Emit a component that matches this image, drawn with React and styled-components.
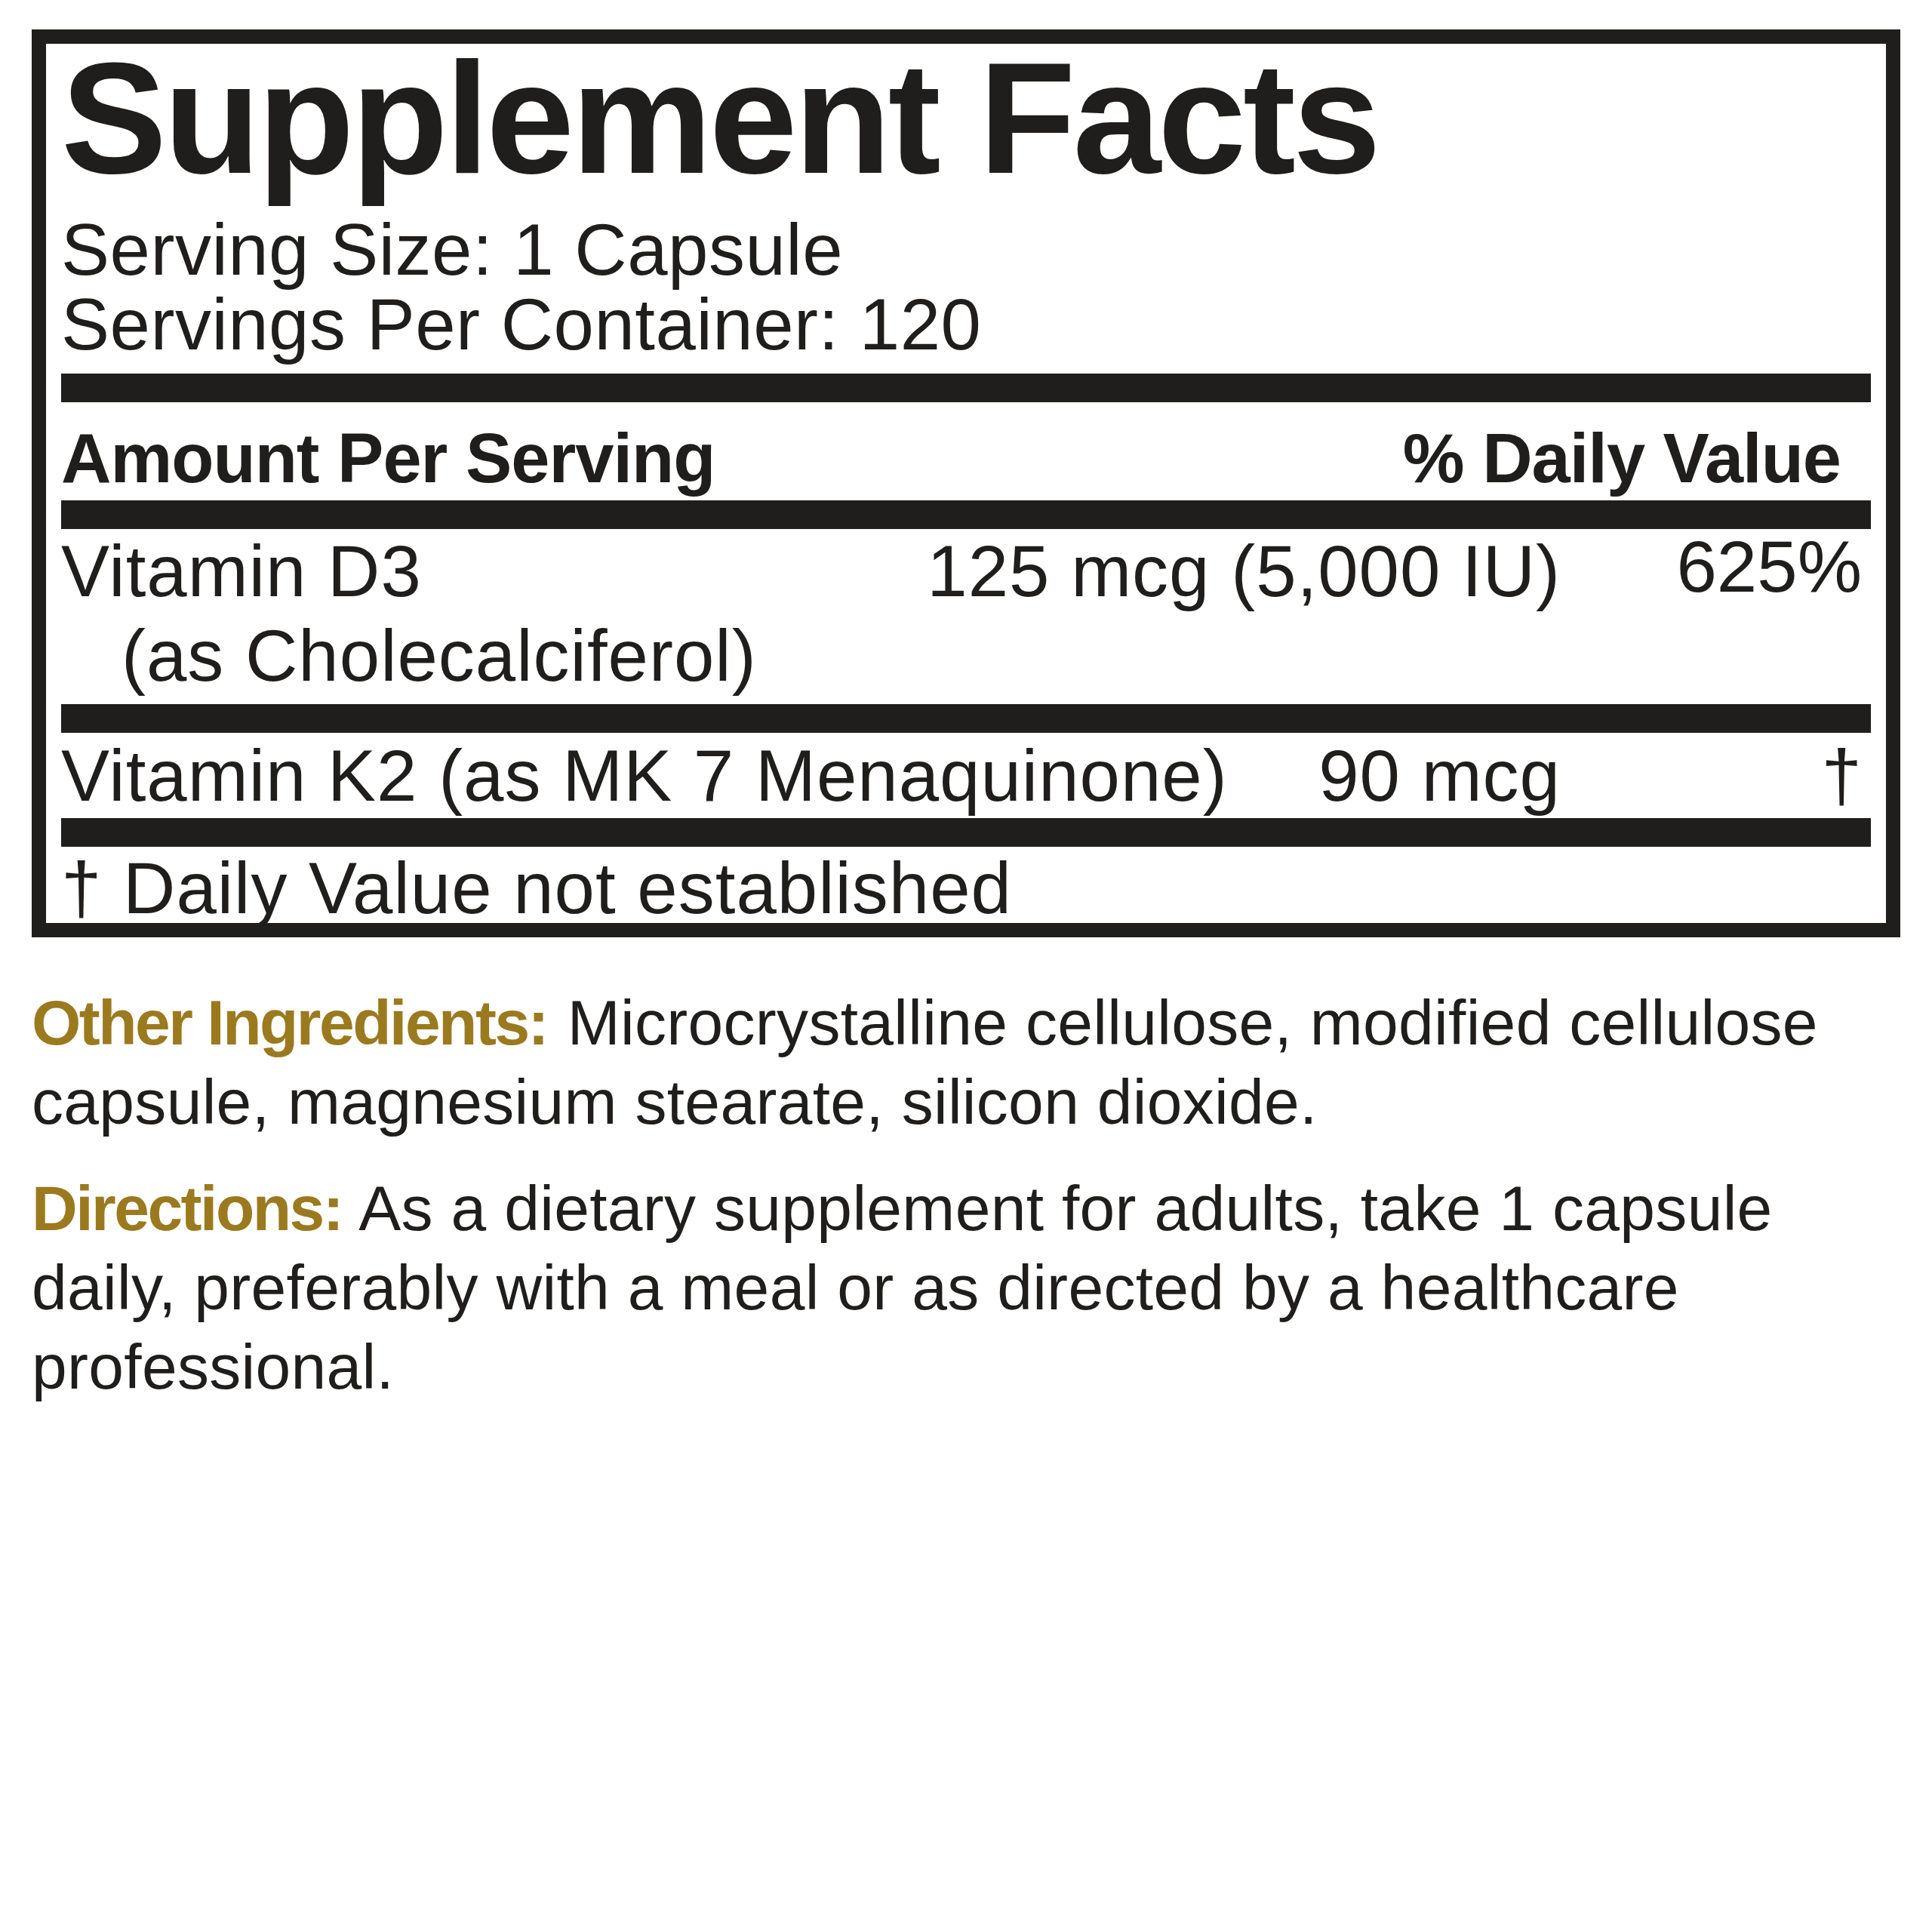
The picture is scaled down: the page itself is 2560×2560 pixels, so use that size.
import React from "react";
import styled, { createGlobalStyle } from "styled-components";

const ink = "#1f1e1c";
const gold = "#9b7a1f";

const GlobalStyle = createGlobalStyle`
  body {
    margin: 0;
    background: #ffffff;
    color: ${ink};
    font-family: "Liberation Sans", Arial, sans-serif;
  }
`;

const Page = styled.div`
  width: 2560px;
  padding: 39px 42px;
  box-sizing: border-box;
`;

const FactsBox = styled.section`
  border: 19px solid ${ink};
  padding: 0 20px;
  display: flex;
  flex-direction: column;
`;

const Title = styled.h1`
  margin: 0;
  font-size: 210px;
  line-height: 198px;
  font-weight: 700;
  letter-spacing: -4px;
`;

const Serving = styled.div`
  margin-top: 25px;
  font-size: 96px;
  line-height: 99px;
  letter-spacing: 0.5px;
`;

const Bar = styled.div`
  height: 38px;
  background: ${ink};
  margin-top: ${(p) => p.$gap || 0}px;
`;

const HeaderRow = styled.div`
  display: flex;
  justify-content: space-between;
  padding: 28px 40px 10px 0;
  font-size: 92px;
  line-height: 92px;
  font-weight: 700;
  letter-spacing: -1px;
`;

const NutrientRow = styled.div`
  display: flex;
  align-items: flex-start;
  padding: 0 12px ${(p) => p.$bottom || 0}px 0;
  font-size: 96px;
  line-height: ${(p) => p.$line}px;
  letter-spacing: 1px;
`;

const Name = styled.div`
  flex: 1;
  display: flex;
  flex-direction: column;
`;

const SubName = styled.span`
  padding-left: 80px;
`;

const Amount = styled.div`
  text-align: right;
  white-space: nowrap;
`;

const Daily = styled.div`
  width: 399px;
  text-align: right;
  margin-top: ${(p) => (p.$lift ? -p.$lift : 0)}px;
  letter-spacing: 0;
`;

const Footnote = styled.div`
  height: 101px;
  font-size: 96px;
  line-height: 109px;
  letter-spacing: 1px;
  white-space: nowrap;
`;

const Paragraph = styled.p`
  margin: ${(p) => p.$top}px 0 0;
  font-size: 84px;
  line-height: 105px;
  letter-spacing: 0.3px;
`;

const Label = styled.strong`
  color: ${gold};
  font-weight: 700;
  letter-spacing: -2.5px;
  padding-right: 3px;
`;

const nutrients = [
  {
    name: "Vitamin D3",
    sub: "(as Cholecalciferol)",
    amount: "125 mcg (5,000 IU)",
    daily: "625%",
    lift: 6,
    line: 112,
    bottom: 8,
  },
  {
    name: "Vitamin K2 (as MK 7 Menaquinone)",
    amount: "90 mcg",
    daily: "†",
    line: 113,
  },
];

export default function App() {
  return (
    <Page>
      <GlobalStyle />
      <FactsBox>
        <Title>Supplement Facts</Title>
        <Serving>
          Serving Size: 1 Capsule
          <br />
          Servings Per Container: 120
        </Serving>
        <Bar $gap={16} />
        <HeaderRow>
          <span>Amount Per Serving</span>
          <span>% Daily Value</span>
        </HeaderRow>
        {nutrients.map((n) => (
          <React.Fragment key={n.name}>
            <Bar />
            <NutrientRow $line={n.line} $bottom={n.bottom}>
              <Name>
                <span>{n.name}</span>
                {n.sub && <SubName>{n.sub}</SubName>}
              </Name>
              <Amount>{n.amount}</Amount>
              <Daily $lift={n.lift}>{n.daily}</Daily>
            </NutrientRow>
          </React.Fragment>
        ))}
        <Bar />
        <Footnote>† Daily Value not established</Footnote>
      </FactsBox>
      <Paragraph $top={61}>
        <Label>Other Ingredients:</Label> Microcrystalline cellulose, modified
        cellulose capsule, magnesium stearate, silicon dioxide.
      </Paragraph>
      <Paragraph $top={36}>
        <Label>Directions:</Label> As a dietary supplement for adults, take 1
        capsule daily, preferably with a meal or as directed by a healthcare
        professional.
      </Paragraph>
    </Page>
  );
}
